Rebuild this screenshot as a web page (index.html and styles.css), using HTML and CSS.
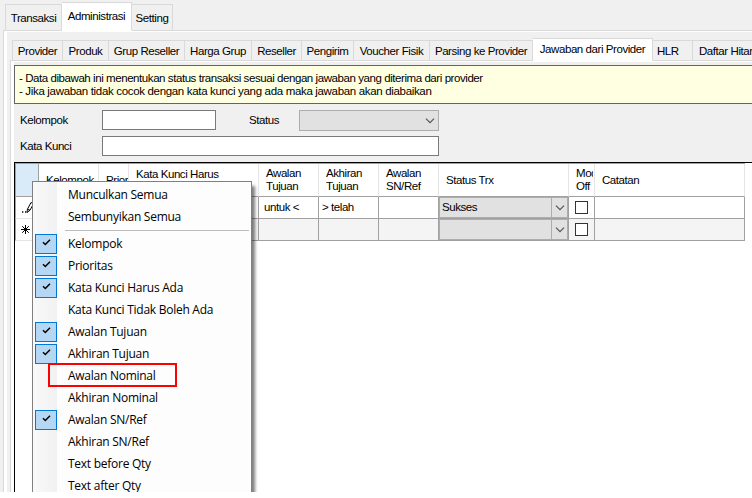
FILE: index.html
```html
<!DOCTYPE html>
<html lang="id">
<head>
<meta charset="utf-8">
<title>Administrasi</title>
<link rel="stylesheet" href="styles.css">
</head>
<body>
<svg class="defs" width="0" height="0">
  <symbol id="chevron" viewBox="0 0 10 6"><path d="M1 .7 5 4.7 9 .7" fill="none" stroke="#555" stroke-width="1.2"/></symbol>
  <symbol id="tick" viewBox="0 0 9 7"><path d="M1 3.3 3.3 5.5 8 .8" fill="none" stroke="#000" stroke-width="1.5"/></symbol>
</svg>
<main class="window">
  <nav class="tabs main-tabs">
    <span class="tab t-transaksi">Transaksi</span>
    <span class="tab active t-admin">Administrasi</span>
    <span class="tab t-setting">Setting</span>
  </nav>
  <div class="pane">
    <nav class="tabs sub-tabs">
      <span class="tab">Provider</span>
      <span class="tab">Produk</span>
      <span class="tab">Grup Reseller</span>
      <span class="tab">Harga Grup</span>
      <span class="tab">Reseller</span>
      <span class="tab">Pengirim</span>
      <span class="tab">Voucher Fisik</span>
      <span class="tab">Parsing ke Provider</span>
      <span class="tab active">Jawaban dari Provider</span>
      <span class="tab hlr">HLR</span>
      <span class="tab daftar">Daftar Hitam</span>
    </nav>
    <div class="page">
      <div class="note">
        <p class="n1">- Data dibawah ini menentukan status transaksi sesuai dengan jawaban yang diterima dari provider</p>
        <p class="n2">- Jika jawaban tidak cocok dengan kata kunci yang ada maka jawaban akan diabaikan</p>
      </div>
      <form class="filter">
        <label>Kelompok</label><div class="input"></div><label class="status">Status</label>
        <div class="select"><svg width="10" height="6"><use href="#chevron"/></svg></div>
        <label>Kata Kunci</label><div class="input wide"></div>
      </form>
      <div class="grid">
        <div class="row head">
          <div class="corner"></div><div>Kelompok</div><div>Prioritas</div><div class="top">Kata Kunci Harus</div><div>Awalan<br>Tujuan</div><div>Akhiran<br>Tujuan</div><div>Awalan<br>SN/Ref</div><div>Status Trx</div><div class="clip"><span>Mode<br>Off</span></div><div>Catatan</div>
        </div>
        <div class="row">
          <div class="rh"><svg width="13" height="13" viewBox="0 0 13 13"><path d="M1 11h1.3M4 11h1.3" stroke="#000" stroke-width="1.3"/><path d="M6 11.5 6.4 8.3 10 1.5 12.5 2.8 9 9.2Z M6.4 8.3 9 9.2" fill="#fff" stroke="#000"/></svg></div><div></div><div></div><div></div><div>untuk &lt;</div><div class="tight">&gt; telah</div><div></div><div class="combo"><span>Sukses</span><i><svg width="10" height="6"><use href="#chevron"/></svg></i></div><div class="chk"><b></b></div><div></div>
        </div>
        <div class="row new">
          <div class="rh"><svg width="9" height="9" viewBox="0 0 9 9"><path d="M4.5 0v9M0 4.5h9M1.2 1.2l6.6 6.6M7.8 1.2 1.2 7.8" stroke="#000" stroke-width="1"/></svg></div><div></div><div></div><div></div><div></div><div></div><div></div><div class="combo"><span></span><i><svg width="10" height="6"><use href="#chevron"/></svg></i></div><div class="chk"><b></b></div><div></div>
        </div>
      </div>
    </div>
  </div>
  <div class="menu">
    <div class="item">Munculkan Semua</div>
    <div class="item">Sembunyikan Semua</div>
    <div class="sep"></div>
    <div class="item on"><i><svg width="9" height="7"><use href="#tick"/></svg></i>Kelompok</div>
    <div class="item on"><i><svg width="9" height="7"><use href="#tick"/></svg></i>Prioritas</div>
    <div class="item on"><i><svg width="9" height="7"><use href="#tick"/></svg></i>Kata Kunci Harus Ada</div>
    <div class="item">Kata Kunci Tidak Boleh Ada</div>
    <div class="item on"><i><svg width="9" height="7"><use href="#tick"/></svg></i>Awalan Tujuan</div>
    <div class="item on"><i><svg width="9" height="7"><use href="#tick"/></svg></i>Akhiran Tujuan</div>
    <div class="item">Awalan Nominal</div>
    <div class="item">Akhiran Nominal</div>
    <div class="item on"><i><svg width="9" height="7"><use href="#tick"/></svg></i>Awalan SN/Ref</div>
    <div class="item">Akhiran SN/Ref</div>
    <div class="item">Text before Qty</div>
    <div class="item">Text after Qty</div>
  </div>
  <div class="marker"></div>
</main>
</body>
</html>
```
FILE: styles.css
```css
* { box-sizing: border-box; }
body { margin: 0; background: #fff; font: 11.5px/13px "Liberation Sans", Arial, sans-serif; letter-spacing: -0.43px; color: #000; }
p { margin: 0; }
.defs { position: absolute; }
.window { position: relative; width: 752px; height: 492px; overflow: hidden; background: #f0f0f0; display: flex; flex-direction: column; }

.tabs { display: flex; align-items: flex-end; white-space: nowrap; flex: none; }
.tab { border: 1px solid #d9d9d9; border-left-width: 0; text-align: center; flex: none; }
.tab:first-child { border-left-width: 1px; }
.tab.active { background: #fff; border-bottom-color: #fff; }
.main-tabs { height: 31px; padding-left: 5px; }
.main-tabs .tab { height: 27px; line-height: 27px; }
.main-tabs .active { height: 29px; line-height: 26px; }
.t-transaksi { width: 57px; }
.t-admin { width: 70px; }
.t-setting { width: 41px; }

.pane { flex: 1; min-height: 0; margin: -1px 0 0 3px; border-top: 1px solid #d9d9d9; border-left: 1px solid #d9d9d9; box-shadow: inset 3px 1px #fff; padding: 9px 0 0 8px; display: flex; flex-direction: column; }
.main-tabs, .sub-tabs { position: relative; z-index: 1; }
.sub-tabs { height: 21px; display: grid; grid-template-columns: 51px 46px 76px 67px 50px 52px 76px 103px 120px 40px 80px; grid-template-rows: 21px; }
.sub-tabs .tab { height: 21px; line-height: 21px; }
.sub-tabs .active { height: 23px; line-height: 20px; }
.sub-tabs .hlr { text-align: left; padding-left: 4px; }
.sub-tabs .daftar { text-align: left; padding-left: 6px; }

.page { flex: 1; min-height: 0; margin: -1px 0 0 -2px; border-top: 1px solid #d9d9d9; border-left: 1px solid #d9d9d9; box-shadow: inset 3px 1px #fff; padding: 4px 0 0 3px; display: flex; flex-direction: column; }
.note { flex: none; height: 39px; background: #ffffe1; border: 1px solid #646464; border-right: 0; padding: 6px 4px; white-space: nowrap; }
.n2 { letter-spacing: -0.33px; }
.filter { flex: none; height: 58px; padding: 6px 0 0 6px; display: grid; grid-template-columns: 82px 147px 50px 140px; grid-template-rows: 20px 20px; row-gap: 6px; align-items: center; }
.input { width: 114px; height: 20px; background: #fff; border: 1px solid #7a7a7a; }
.input.wide { grid-column: 2 / 5; width: 337px; }
.select { height: 21px; align-self: start; background: #e1e1e1; border: 1px solid #adadad; display: flex; align-items: center; justify-content: flex-end; padding-right: 3px; }

.grid { flex: 1; min-height: 0; background: #fff; border-top: 1px solid #000; border-left: 1px solid #000; }
.row { display: grid; grid-template-columns: 24px 60px 30px 130px 60px 60px 60px 130px 26px 150px; width: 730px; height: 22px; }
.row > div { border-right: 1px solid #a0a0a0; border-bottom: 1px solid #a0a0a0; padding-left: 5px; display: flex; align-items: center; overflow: hidden; white-space: nowrap; min-width: 0; }
.row.head { height: 34px; border-top: 1px solid #a0a0a0; }
.head > div { border-right-color: #e5e5e5; padding-left: 7px; }
.head > .corner { background: #d9ebf9; border-right-color: #a0a0a0; border-left: 1px solid #a0a0a0; }
.head > .top { align-items: flex-start; padding-top: 4px; }
.head > .clip span { width: 17px; overflow: hidden; }
.row > .rh { border-right-color: #a0a0a0; border-bottom-color: #e5e5e5; border-left: 1px solid #a0a0a0; }
.row.new > div { background: #f4f4f4; }
.row.new > .rh { background: #fff; }
.row > .tight { padding-left: 3px; }
.row > .combo, .row.new > .combo { background: #e1e1e1; padding: 0; box-shadow: inset 0 0 0 1px #adadad; }
.combo span { flex: 1; padding-left: 3px; }
.combo i { width: 17px; height: 100%; border-left: 1px solid #adadad; display: grid; place-items: center; padding-right: 1px; }
.row > .chk { padding-left: 6px; }
.chk b { width: 13px; height: 13px; border: 1px solid #333; background: #fff; }

.menu { position: absolute; left: 32px; top: 181px; width: 220px; height: 330px; border: 1px solid #808080; background: linear-gradient(90deg, #f9f9f9, #f1f1f1) 0 0 / 24px 100% no-repeat #fdfdfd; padding: 2px 2px; box-shadow: 4px 4px 3px -1px rgba(0,0,0,.5); font: 12px/21px "Open Sans", "Noto Sans", sans-serif; letter-spacing: -0.26px; }
.item { height: 22px; display: flex; padding-left: 33px; white-space: nowrap; }
.item.on { padding-left: 0; }
.item i { width: 22px; height: 20px; margin: 1px 11px 0 0; background: #b5d7f3; border: 1px solid #0078d7; display: flex; justify-content: center; padding-top: 4px; }
.sep { height: 5px; margin: 0 0 0 30px; border-top: 1px solid #bdbdbd; transform: translateY(2px); }
.marker { position: absolute; left: 48px; top: 363px; width: 129px; height: 24px; border: 2px solid #f00; }
```
